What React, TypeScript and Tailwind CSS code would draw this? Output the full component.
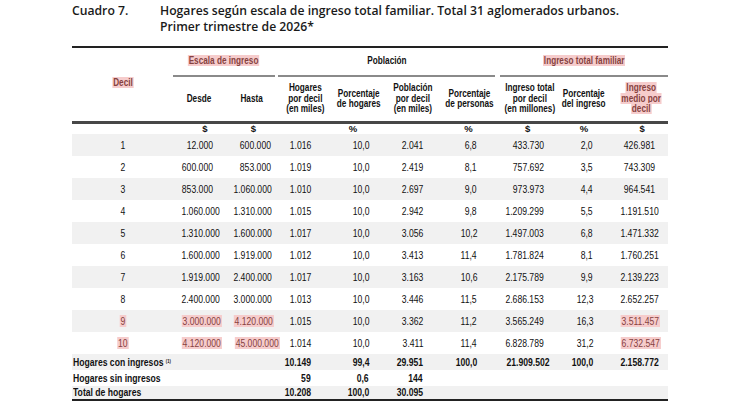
import React from 'react';

const COLS = [101, 52, 53, 54, 54, 54, 57, 59, 56, 56];
// right padding of each numeric column, so values line up like the source table
const PAD = ['', 'pr-[12px]', 'pr-[7px]', 'pr-[21px]', 'pr-[17px]', 'pr-[17px]', 'pr-[20px]', 'pr-[12px]', 'pr-[19px]', 'pr-[13px]'];

const ROWS: string[][] = [
  ['1', '12.000', '600.000', '1.016', '10,0', '2.041', '6,8', '433.730', '2,0', '426.981'],
  ['2', '600.000', '853.000', '1.019', '10,0', '2.419', '8,1', '757.692', '3,5', '743.309'],
  ['3', '853.000', '1.060.000', '1.010', '10,0', '2.697', '9,0', '973.973', '4,4', '964.541'],
  ['4', '1.060.000', '1.310.000', '1.015', '10,0', '2.942', '9,8', '1.209.299', '5,5', '1.191.510'],
  ['5', '1.310.000', '1.600.000', '1.017', '10,0', '3.056', '10,2', '1.497.003', '6,8', '1.471.332'],
  ['6', '1.600.000', '1.919.000', '1.012', '10,0', '3.413', '11,4', '1.781.824', '8,1', '1.760.251'],
  ['7', '1.919.000', '2.400.000', '1.017', '10,0', '3.163', '10,6', '2.175.789', '9,9', '2.139.223'],
  ['8', '2.400.000', '3.000.000', '1.013', '10,0', '3.446', '11,5', '2.686.153', '12,3', '2.652.257'],
  ['9', '3.000.000', '4.120.000', '1.015', '10,0', '3.362', '11,2', '3.565.249', '16,3', '3.511.457'],
  ['10', '4.120.000', '45.000.000', '1.014', '10,0', '3.411', '11,4', '6.828.789', '31,2', '6.732.547'],
];

const SUMMARY: { label: React.ReactNode; values: string[]; striped: boolean }[] = [
  {
    label: (
      <>
        Hogares con ingresos <sup className="text-[5px]">(1)</sup>
      </>
    ),
    values: ['10.149', '99,4', '29.951', '100,0', '21.909.502', '100,0', '2.158.772'],
    striped: true,
  },
  { label: 'Hogares sin ingresos', values: ['59', '0,6', '144', '', '', '', ''], striped: false },
  { label: 'Total de hogares', values: ['10.208', '100,0', '30.095', '', '', '', ''], striped: true },
];

// Arial Narrow look: Liberation Sans squeezed horizontally
function N({ children, o = 'c' }: { children: React.ReactNode; o?: 'l' | 'c' | 'r' }) {
  const origin = o === 'l' ? 'origin-left' : o === 'r' ? 'origin-right' : 'origin-center';
  return <span className={`inline-block whitespace-nowrap scale-x-[0.82] ${origin}`}>{children}</span>;
}

function Mark({ children }: { children: React.ReactNode }) {
  return <span className="bg-[#f6cccc] text-[#86423f] px-[1px] [box-decoration-break:clone]">{children}</span>;
}

// highlighted cells in the last two deciles
function isMarked(row: number, col: number) {
  return row >= 8 && (col <= 2 || col === 9);
}

const unit = 'border-t-[3px] border-[#474747] p-0';

export default function App() {
  return (
    <div className="w-[730px] h-[402px] bg-white overflow-hidden text-[#111]">
      {/* Title */}
      <div
        className="h-[46px] pl-[72px] pt-[3px] flex text-[12.2px] font-semibold leading-[16px] text-[#1a1a1a]"
        style={{ fontFamily: '"Open Sans", "Noto Sans", sans-serif' }}
      >
        <div className="w-[88px] shrink-0">Cuadro 7.</div>
        <div>
          Hogares según escala de ingreso total familiar. Total 31 aglomerados urbanos.
          <br />
          Primer trimestre de 2026*
        </div>
      </div>

      <table
        className="ml-[72px] w-[596px] table-fixed border-separate border-spacing-0"
        style={{ fontFamily: '"Liberation Sans", Arial, sans-serif' }}
      >
        <colgroup>
          {COLS.map((w, i) => (
            <col key={i} style={{ width: w }} />
          ))}
        </colgroup>
        <thead className="text-[10px] font-bold leading-[10.5px]">
          <tr className="h-[31px]">
            <th rowSpan={2} className="border-t-2 border-[#222] align-middle text-center p-0 pb-[2px]">
              <N>
                <Mark>Decil</Mark>
              </N>
            </th>
            <th colSpan={2} className="border-t-2 border-[#222] align-bottom p-0">
              <div className="mr-[3px] border-b-2 border-[#8a8a8a] pb-[9px] text-center">
                <N>
                  <Mark>Escala de ingreso</Mark>
                </N>
              </div>
            </th>
            <th colSpan={4} className="border-t-2 border-[#222] align-bottom p-0">
              <div className="mr-[2px] border-b-2 border-[#8a8a8a] pb-[9px] text-center">
                <N>Población</N>
              </div>
            </th>
            <th colSpan={3} className="border-t-2 border-[#222] align-bottom p-0">
              <div className="ml-[3px] border-b-2 border-[#8a8a8a] pb-[9px] text-center">
                <N>
                  <Mark>Ingreso total familiar</Mark>
                </N>
              </div>
            </th>
          </tr>
          <tr className="h-[44px] text-center align-middle">
            <th className="p-0">
              <N>Desde</N>
            </th>
            <th className="p-0">
              <N>Hasta</N>
            </th>
            <th className="p-0">
              <N>
                Hogares
                <br />
                por decil
                <br />
                (en miles)
              </N>
            </th>
            <th className="p-0 pr-[4px]">
              <N>
                Porcentaje
                <br />
                de hogares
              </N>
            </th>
            <th className="p-0">
              <N>
                Población
                <br />
                por decil
                <br />
                (en miles)
              </N>
            </th>
            <th className="p-0">
              <N>
                Porcentaje
                <br />
                de personas
              </N>
            </th>
            <th className="p-0 pl-[2px]">
              <N>
                Ingreso total
                <br />
                por decil
                <br />
                (en millones)
              </N>
            </th>
            <th className="p-0">
              <N>
                Porcentaje
                <br />
                del ingreso
              </N>
            </th>
            <th className="p-0 pl-[3px]">
              <N>
                <Mark>
                  Ingreso
                  <br />
                  medio por
                  <br />
                  decil
                </Mark>
              </N>
            </th>
          </tr>
        </thead>
        <tbody className="text-[10.5px]">
          {/* units */}
          <tr className="h-[12px] text-[9.5px] font-bold leading-[10px] text-center">
            <td className={unit} />
            <td className={`${unit} pl-[12px]`}>$</td>
            <td className={`${unit} pl-[4px]`}>$</td>
            <td className={unit} />
            <td className={`${unit} pr-[12px]`}>%</td>
            <td className={unit} />
            <td className={unit}>%</td>
            <td className={`${unit} pl-[2px]`}>$</td>
            <td className={unit}>%</td>
            <td className={`${unit} pl-[4px]`}>$</td>
          </tr>

          {ROWS.map((row, r) => (
            <tr key={r} className={`h-[22px] ${r % 2 === 0 ? 'bg-[#f1f1f1]' : 'bg-white'}`}>
              {row.map((v, c) => (
                <td key={c} className={`p-0 leading-none ${c === 0 ? 'text-center pl-[1px]' : `text-right ${PAD[c]}`}`}>
                  <N o={c === 0 ? 'c' : 'r'}>{isMarked(r, c) ? <Mark>{v}</Mark> : v}</N>
                </td>
              ))}
            </tr>
          ))}

          {SUMMARY.map((s, i) => {
            const last = i === 2 ? 'border-b-2 border-[#222]' : '';
            return (
              <tr
                key={i}
                className={`font-bold leading-none ${i === 2 ? 'h-[15px]' : 'h-[16px]'} ${s.striped ? 'bg-[#f1f1f1]' : 'bg-white'}`}
              >
                <td colSpan={3} className={`p-0 pl-[1px] text-left ${last}`}>
                  <N o="l">{s.label}</N>
                </td>
                {s.values.map((v, j) => (
                  <td key={j} className={`p-0 text-right ${PAD[j + 3]} ${last}`}>
                    <N o="r">{v}</N>
                  </td>
                ))}
              </tr>
            );
          })}
        </tbody>
      </table>
    </div>
  );
}
